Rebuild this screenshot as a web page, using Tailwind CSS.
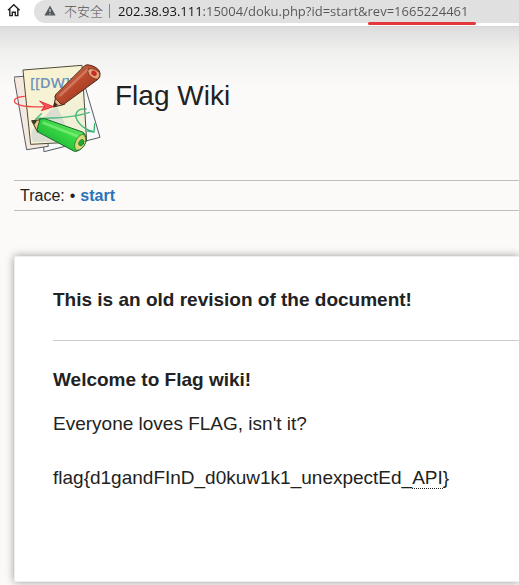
<!DOCTYPE html>
<html lang="en">
<head>
<meta charset="utf-8">
<meta name="viewport" content="width=device-width, initial-scale=1">
<title>start [Flag Wiki]</title>
<script src="https://cdn.jsdelivr.net/npm/@tailwindcss/browser@4"></script>
</head>
<body class="flex min-h-screen flex-col overflow-x-hidden bg-[#fbfaf9] font-['Liberation_Sans',Arial,sans-serif] text-[#222]">
<form class="relative flex h-[27px] shrink-0 items-start border-b border-[#d4d4d4] bg-white pl-1.5">
  <button type="button" aria-label="Home" class="mt-[3px] mr-[13px] size-[15px] shrink-0">
    <svg viewBox="0 0 15 15" class="size-[15px]" fill="none" stroke="#222" stroke-width="1.4"><path d="M2 7.2 7.8 1.7l5.8 5.5M3.8 6v6.6h2.5V9.3h3v3.3h2.5V6"/></svg>
  </button>
  <div class="flex h-[23px] min-w-0 flex-1 items-center rounded-l-full bg-[#e0e0e0] pb-0.5 pl-2.5">
    <svg viewBox="0 0 12 11" class="h-[11px] w-3 shrink-0"><path d="M6 .5 11.6 10.5H.4z" fill="#55585d"/><path d="M6 4v3M6 8.2v1.2" stroke="#e0e0e0" stroke-width="1.1"/></svg>
    <label for="url" class="ml-2 shrink-0 font-['Noto_Sans_CJK_SC',sans-serif] text-[13px] leading-5 font-light text-[#555]">不安全</label>
    <span class="mr-2 ml-1.5 h-3.5 w-px shrink-0 bg-[#888]"></span>
    <input id="url" type="text" spellcheck="false" value="202.38.93.111:15004/doku.php?id=start&amp;rev=1665224461" class="h-5 min-w-0 flex-1 bg-[linear-gradient(90deg,#111_84px,#555_84px)] bg-clip-text font-['Open_Sans',sans-serif] text-[13px] text-transparent outline-none">
  </div>
  <span class="absolute top-[22px] left-[368px] h-[3px] w-[108px] rounded-full bg-[#e5373c]"></span>
</form>
<div class="flex flex-1 flex-col bg-[linear-gradient(#dddddd,#f0f0ef_24px,#fbfaf9_60px)] pt-[37px] pl-3.5">
  <header>
    <a href="#" class="flex h-[88px] items-start">
      <svg viewBox="27 27 264 264" class="size-[88px] shrink-0" stroke-linejoin="round" stroke-linecap="round">
        <defs>
          <linearGradient id="paper" x2="1" y2="1"><stop stop-color="#fbf3cf"/><stop offset="1" stop-color="#eef0da"/></linearGradient>
          <linearGradient id="red" x2="1" y2="1"><stop stop-color="#d98465"/><stop offset=".5" stop-color="#b9482b"/><stop offset="1" stop-color="#82301b"/></linearGradient>
          <linearGradient id="green" x1="1" y1="0" x2="0" y2="1"><stop stop-color="#8cf07a"/><stop offset=".45" stop-color="#35d743"/><stop offset="1" stop-color="#149a31"/></linearGradient>
        </defs>
        <path d="M107 95 240 94 285 247 118 290z" fill="#f7f8f8" stroke="#555b66" stroke-width="3"/>
        <path d="M28 66 96 61 130 274 66 284z" fill="#f5e9df" stroke="#555b66" stroke-width="3"/>
        <path d="M55 45 231 31 245 259 78 268z" fill="url(#paper)" stroke="#4c4d3c" stroke-width="3"/>
        <path d="M157 157c-27 5-31 27-53 44-20 15-31 31-20 60l105-3-12-60z" fill="#d3dad0" opacity=".8"/>
        <text x="75" y="98" font-family="Open Sans" font-weight="600" font-size="45" fill="#7193b9">[[DW]]</text>
        <path d="M58 124c-38 2-38 22-10 27 22 5 53 5 82 4" fill="none" stroke="#f34444" stroke-width="4"/>
        <path d="M105 139 145 155 109 167 119 154z" fill="#f35556" stroke="#e52c35" stroke-width="3"/>
        <path d="M92 193 109 176M96 190c60 0 115-4 157-18" fill="none" stroke="#4fbd7f" stroke-width="4"/>
        <path d="M243 162c-33-2-38 22-20 43 11 13 24 20 40 24M269 206l-2 25-19-3" fill="none" stroke="#39b471" stroke-width="4"/>
        <path d="M146 155 154 117 178 147z" fill="#e8b984" stroke="#36251d" stroke-width="3"/>
        <path d="M154 117 239 32q6-5 18-1 26 8 28 24 1 11-5 17L176 148q-8 3-15-8-7-9-11-12z" fill="url(#red)" stroke="#53271b" stroke-width="3"/>
        <path d="M166 121 248 44" stroke="#dc947a" stroke-width="7" opacity=".6"/>
        <path d="M250 42q17-5 34 12 2 10-5 18-17 1-27-14-6-9-2-16z" fill="#e5a477" stroke="#602d1e" stroke-width="2"/>
        <ellipse cx="267" cy="55" rx="9" ry="7" transform="rotate(40 267 55)" fill="#c52d26"/>
        <path d="m144 156 5-15 10 9z" fill="#44261f"/>
        <path d="M81 197 119 193 99 231z" fill="#eac48a" stroke="#30341e" stroke-width="3"/>
        <path d="M105 192 119 191 235 232q9 7 8 22-2 24-24 33-6 4-13 1L101 232q-7-7-2-19 4-11 6-21z" fill="url(#green)" stroke="#17692a" stroke-width="3"/>
        <path d="M116 204 216 243" stroke="#91f184" stroke-width="8" opacity=".65"/>
        <path d="M235 237q10 10 7 25-9 23-27 24-10-8-4-25 7-20 24-24z" fill="#d8d779" stroke="#26652b" stroke-width="2"/>
        <ellipse cx="229" cy="263" rx="7" ry="10" transform="rotate(30 229 263)" fill="#22a735" stroke="#15762b" stroke-width="2"/>
        <path d="m81 197 16-1-9 13z" fill="#34391d"/>
      </svg>
      <span class="ml-[13px] pt-3.5 text-[28px] leading-9">Flag Wiki</span>
    </a>
  </header>
  <nav class="mt-7 flex h-[31px] items-center gap-[5px] border-y border-[#bfbfbf] pl-1.5 text-base">
    <span>Trace:</span><span>•</span><a href="#" class="font-bold text-[#2b73b7]">start</a>
  </nav>
  <main class="mt-[45px] mb-[3px] flex-1 rounded-l-[2px] border border-r-0 border-[#eee] bg-white pl-[38px] text-[19px] leading-7 shadow-[0_0_9px_#999]">
    <p class="pt-[29px] font-bold">This is an old revision of the document!</p>
    <hr class="mt-[26px] border-[#ccc]">
    <p class="mt-[25px] font-bold">Welcome to Flag wiki!</p>
    <p class="mt-4">Everyone loves FLAG, isn't it?</p>
    <p class="mt-[26px]">flag{d1gandFInD_d0kuw1k1_unexpectEd_<abbr title="Application Programming Interface" class="border-b border-dotted border-[#222] no-underline">API</abbr>}</p>
  </main>
</div>
</body>
</html>
